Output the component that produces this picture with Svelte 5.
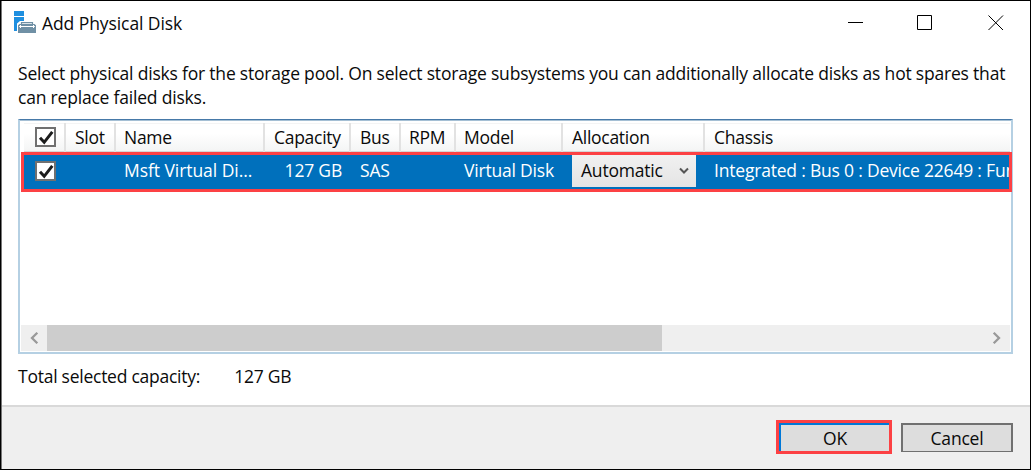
<script>
  const columns = [
    { id: 'slot', title: 'Slot', value: '' },
    { id: 'name', title: 'Name', value: 'Msft Virtual Di...' },
    { id: 'capacity', title: 'Capacity', value: '127 GB' },
    { id: 'bus', title: 'Bus', value: 'SAS' },
    { id: 'rpm', title: 'RPM', value: '' },
    { id: 'model', title: 'Model', value: 'Virtual Disk' },
    { id: 'allocation', title: 'Allocation', value: 'Automatic' },
    { id: 'chassis', title: 'Chassis', value: 'Integrated : Bus 0 : Device 22649 : Fun' }
  ];
</script>

{#snippet check()}
  <svg class="check" width="21" height="20" viewBox="0 0 21 20">
    <rect x="1" y="1" width="19" height="18" fill="#fff" stroke="#707070" stroke-width="2" />
    <path d="M5 10.8 9.2 15.3 17.3 4.8" fill="none" stroke="#1c1c1c" stroke-width="3" />
  </svg>
{/snippet}

<main class="window">
  <header class="titlebar">
    <svg class="app" width="22" height="22" viewBox="0 0 22 22">
      <path fill="#1e8fe0" d="M0 0h10v5H0zM0 6h10v4H6L3 12.5V20H0z" />
      <path d="M7.5 13.5V11.7h11v1.8" fill="none" stroke="#7090a5" stroke-width="1.2" />
      <path fill="#7090a5" d="M4 14.2 5.5 13h15l1.5 1.2V22H4z" />
      <path d="M5.5 15.5h15M7 14 5.5 15.5 7 17M19 14l1.5 1.5L19 17" fill="none" stroke="#fff" />
    </svg>
    <h1>Add Physical Disk</h1>
    <div class="controls">
      <svg width="16" height="16" viewBox="0 0 16 16"><path d="M0 7.5h15" /></svg>
      <svg width="16" height="16" viewBox="0 0 16 16"><path d="M.5.5h14v14H.5z" /></svg>
      <svg class="close" width="16" height="16" viewBox="0 0 16 16"><path d="m.5.5 14.5 14.5M15 .5.5 15" /></svg>
    </div>
  </header>

  <section class="content">
    <p class="intro">
      <span>Select physical disks for the storage pool. On select storage subsystems you can additionally allocate disks as hot spares that</span>
      <span class="second">can replace failed disks.</span>
    </p>
    <div class="list">
      <div class="grid head">
        <div class="cell pick">{@render check()}</div>
        {#each columns as c}<div class="cell {c.id}"><span>{c.title}</span></div>{/each}
      </div>
      <div class="grid row">
        <div class="cell pick">{@render check()}</div>
        {#each columns as c}
          <div class="cell {c.id}">
            {#if c.id === 'allocation'}
              <div class="combo">
                <span>{c.value}</span>
                <svg width="10" height="8" viewBox="0 0 10 8"><path d="m1 1.5 4 4 4-4" /></svg>
              </div>
            {:else}<span>{c.value}</span>{/if}
          </div>
        {/each}
      </div>
      <div class="scroll">
        <svg width="9" height="12" viewBox="0 0 9 12"><path d="M7.3.8 2 6l5.3 5.2" /></svg>
        <div class="thumb"></div>
        <svg class="right" width="9" height="12" viewBox="0 0 9 12"><path d="M1.7.8 7 6l-5.3 5.2" /></svg>
      </div>
    </div>
    <div class="total"><span class="label">Total selected capacity:</span><span class="value">127 GB</span></div>
  </section>

  <footer>
    <div class="focus"><button class="ok">OK</button></div>
    <button class="cancel">Cancel</button>
  </footer>
</main>

<style>
  :global(body) { margin: 0; overflow: hidden; }
  * { box-sizing: border-box; }
  .window {
    width: 1031px; height: 470px; display: flex; flex-direction: column;
    border: 1px solid #000; box-shadow: inset 1px 0 #777; background: #fff; color: #0a0a0a;
    font: 17.5px/24px "Open Sans", "Noto Sans", sans-serif; letter-spacing: -0.2px; white-space: nowrap;
  }
  .titlebar { height: 60px; padding: 10px 26px 0 13px; display: flex; align-items: flex-start; }
  h1 { margin: 0 0 0 6px; font: inherit; letter-spacing: -0.08px; }
  .controls { margin-left: auto; padding-top: 4px; display: flex; gap: 53px; }
  .controls svg { fill: none; stroke: #000; stroke-width: 1; }
  .controls .close { margin-left: 2px; }
  .content { height: 344px; padding: 0 17px; display: flex; flex-direction: column; }
  .intro { margin: 0; height: 58px; }
  .intro span { display: block; width: max-content; }
  .list {
    height: 235px; border: 2px solid #b5d0e3; border-top: 1px solid #4679a8;
    box-shadow: inset 0 1px #a5bfd4; display: flex; flex-direction: column; padding: 3px 1px 1px;
  }
  .grid { display: grid; grid-template-columns: 42px 50px 149px 86px 50px 55px 107px 142px 1fr; }
  .head { height: 29px; margin-left: 3px; background: linear-gradient(#fff, #fff 35%, #f3f4f4); box-shadow: inset 0 -1px #d5d5d5, inset 0 1px #f4f4f4; letter-spacing: -0.28px; }
  .head .cell { border-right: 2px solid #e2e2e2; }
  .head .chassis { border: 0; }
  .cell { padding: 2px 0 0 9px; overflow: hidden; }
  .name, .rpm, .model { padding-left: 8px; }
  .cell.pick { padding: 4px 0 0 11px; }
  .check { display: block; }
  .row { height: 40px; border: 3px solid #fc4144; background: #0070bc; color: #fff; margin-right: -2px; }
  .row .cell { height: 34px; padding-top: 3px; }
  .row .pick { padding-top: 6px; }
  .row .name { letter-spacing: -0.06px; }
  .row .capacity { text-align: right; padding-right: 9px; }
  .row .allocation { padding-top: 0; }
  .combo { width: 124px; height: 32px; padding: 3px 7px 0 9px; display: flex; justify-content: space-between; background: linear-gradient(#f1f1f1, #e4e4e4); color: #0a0a0a; }
  .combo svg { margin-top: 9px; fill: none; stroke: #555; stroke-width: 2; }
  .scroll { height: 26px; margin-top: auto; display: flex; align-items: center; background: #efefef; padding-left: 9px; }
  .scroll svg { fill: none; stroke: #999; stroke-width: 2.3; }
  .thumb { width: 615px; height: 26px; margin-left: 8px; background: #cdcdcd; }
  .scroll .right { margin-left: auto; margin-right: 9px; }
  .total { margin-top: 10px; display: flex; letter-spacing: -0.25px; }
  .value { margin-left: 34px; }
  footer { flex: 1; border-top: 2px solid #d9d9d9; background: #efefef; margin-left: 1px; padding: 13px 17px 0; display: flex; justify-content: flex-end; gap: 9px; }
  .focus { width: 116px; height: 34px; border: 3px solid #fc4144; }
  button { width: 112px; height: 29px; margin: 3px 0 0; padding: 0; border: 2px solid #707070; border-bottom-width: 1px; background: #ddd; color: #0a0a0a; font: inherit; letter-spacing: inherit; }
  .focus button { display: block; width: 110px; height: 28px; margin: 0; border: 2px solid #0078d7; border-right: 0; border-bottom: 0; }
</style>
